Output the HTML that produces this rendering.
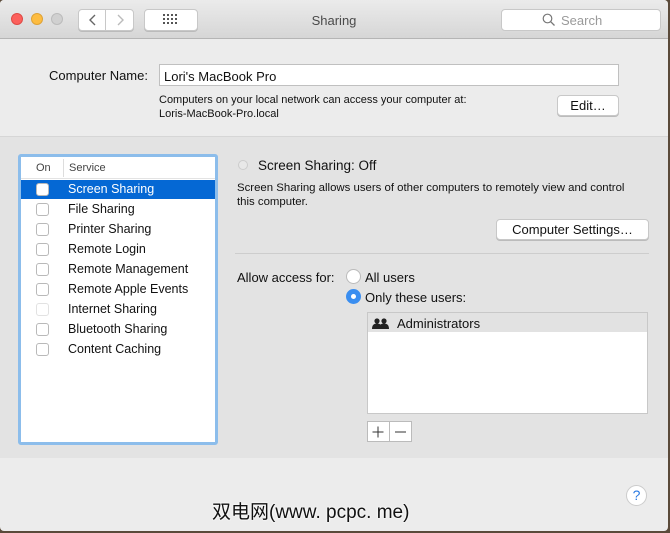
<!DOCTYPE html>
<html><head><style>
*{margin:0;padding:0;box-sizing:border-box}
body{width:670px;height:533px;overflow:hidden;font-family:"Liberation Sans",sans-serif;font-size:12.5px;color:#111;background:#5a4a3a;position:relative}
.a{position:absolute}
.win{left:0;top:0;width:668px;height:531px;background:#ececec;border-radius:4px;overflow:hidden}
.tb{left:0;top:0;width:668px;height:39px;background:linear-gradient(#ebebeb,#d6d6d6);border-bottom:1px solid #b5b5b5}
.dot{width:12px;height:12px;border-radius:50%;top:13px}
.btn{background:#fff;border:1px solid #c8c8c8;border-radius:4px;box-shadow:0 1px 0 #bbb}
.cb{width:13px;height:13px;border:1px solid #b9b9b9;border-radius:3px;background:#fff;left:36px}
.li{left:68px;font-size:12.5px}
</style></head><body>
<div class="a win">
<div class="a tb"></div>
<div class="a dot" style="left:11px;background:#fc605c;border:1px solid #de4a45"></div>
<div class="a dot" style="left:31px;background:#fdbc40;border:1px solid #dea236"></div>
<div class="a dot" style="left:51px;background:#d0d0d0;border:1px solid #bbb"></div>
<div class="a btn" style="left:78px;top:9px;width:56px;height:22px"></div>
<div class="a" style="left:105px;top:9px;width:1px;height:22px;background:#c8c8c8"></div>
<svg class="a" style="left:86px;top:13px" width="44" height="14"><path d="M9 2 L4 7 L9 12" stroke="#666" stroke-width="1.4" fill="none"/><path d="M32 2 L37 7 L32 12" stroke="#bbb" stroke-width="1.4" fill="none"/></svg>
<div class="a btn" style="left:144px;top:9px;width:54px;height:22px"></div>
<svg class="a" style="left:163px;top:14px" width="16" height="12" fill="#555"><g><rect x="0" y="0" width="2" height="2"/><rect x="4" y="0" width="2" height="2"/><rect x="8" y="0" width="2" height="2"/><rect x="12" y="0" width="2" height="2"/><rect x="0" y="4" width="2" height="2"/><rect x="4" y="4" width="2" height="2"/><rect x="8" y="4" width="2" height="2"/><rect x="12" y="4" width="2" height="2"/><rect x="0" y="8" width="2" height="2"/><rect x="4" y="8" width="2" height="2"/><rect x="8" y="8" width="2" height="2"/><rect x="12" y="8" width="2" height="2"/></g></svg>
<div class="a" style="left:0;width:668px;top:13px;text-align:center;font-size:13px;color:#4a4a4a">Sharing</div>
<div class="a btn" style="left:501px;top:9px;width:160px;height:22px;box-shadow:none"></div>
<svg class="a" style="left:542px;top:13px" width="14" height="14"><circle cx="5.5" cy="5.5" r="4.3" stroke="#777" stroke-width="1.2" fill="none"/><path d="M8.7 8.7 L12.5 12.5" stroke="#777" stroke-width="1.3"/></svg>
<div class="a" style="left:561px;top:13px;font-size:13px;color:#9a9a9a">Search</div>

<div class="a" style="left:49px;top:68px;font-size:13px">Computer Name:</div>
<div class="a" style="left:159px;top:64px;width:460px;height:22px;background:#fff;border:1px solid #c0c0c0;padding:4px 4px;font-size:13px">Lori's MacBook Pro</div>
<div class="a" style="left:159px;top:93px;font-size:11px;line-height:14px">Computers on your local network can access your computer at:<br>Loris-MacBook-Pro.local</div>
<div class="a btn" style="left:557px;top:95px;width:62px;height:21px;text-align:center;line-height:19px;font-size:13px">Edit…</div>

<div class="a" style="left:0;top:136px;width:668px;height:1px;background:#d6d6d6"></div>
<div class="a" style="left:0;top:137px;width:668px;height:321px;background:#e3e3e3"></div>

<div class="a" style="left:18px;top:154px;width:200px;height:291px;border:3px solid #8cbdeb;border-radius:3px;background:#fff"></div>
<div class="a" style="left:21px;top:157px;width:194px;height:22px;border-bottom:1px solid #e3e3e3"></div>
<div class="a" style="left:36px;top:162px;font-size:11px;color:#444">On</div>
<div class="a" style="left:63px;top:159px;width:1px;height:18px;background:#ddd"></div>
<div class="a" style="left:69px;top:162px;font-size:11px;color:#444">Service</div>
<div class="a" style="left:21px;top:180px;width:194px;height:19px;background:#0568d4"></div>
<div class="a cb" style="top:183px"></div><div class="a li" style="top:182px;color:#fff">Screen Sharing</div>
<div class="a cb" style="top:203px"></div><div class="a li" style="top:202px">File Sharing</div>
<div class="a cb" style="top:223px"></div><div class="a li" style="top:222px">Printer Sharing</div>
<div class="a cb" style="top:243px"></div><div class="a li" style="top:242px">Remote Login</div>
<div class="a cb" style="top:263px"></div><div class="a li" style="top:262px">Remote Management</div>
<div class="a cb" style="top:283px"></div><div class="a li" style="top:282px">Remote Apple Events</div>
<div class="a cb" style="top:303px;border-color:#e2e2e2"></div><div class="a li" style="top:302px">Internet Sharing</div>
<div class="a cb" style="top:323px"></div><div class="a li" style="top:322px">Bluetooth Sharing</div>
<div class="a cb" style="top:343px"></div><div class="a li" style="top:342px">Content Caching</div>

<div class="a" style="left:238px;top:160px;width:10px;height:10px;border-radius:50%;border:1px solid #ccc;background:#e8e8e8"></div>
<div class="a" style="left:258px;top:158px;font-size:13.5px">Screen Sharing: Off</div>
<div class="a" style="left:237px;top:181px;font-size:11.4px;line-height:14px">Screen Sharing allows users of other computers to remotely view and control<br>this computer.</div>
<div class="a btn" style="left:496px;top:219px;width:153px;height:21px;text-align:center;line-height:19px;font-size:13px">Computer Settings…</div>
<div class="a" style="left:235px;top:253px;width:414px;height:1px;background:#cdcdcd"></div>
<div class="a" style="left:237px;top:270px;font-size:13px">Allow access for:</div>
<div class="a" style="left:346px;top:269px;width:15px;height:15px;border-radius:50%;border:1px solid #bbb;background:#fff"></div>
<div class="a" style="left:365px;top:270px;font-size:13px">All users</div>
<div class="a" style="left:346px;top:289px;width:15px;height:15px;border-radius:50%;background:#3a8ef0"></div>
<div class="a" style="left:351px;top:294px;width:5px;height:5px;border-radius:50%;background:#fff"></div>
<div class="a" style="left:365px;top:290px;font-size:13px">Only these users:</div>
<div class="a" style="left:367px;top:312px;width:281px;height:102px;background:#fff;border:1px solid #c8c8c8"></div>
<div class="a" style="left:368px;top:313px;width:279px;height:19px;background:#e2e2e2"></div>
<svg class="a" style="left:372px;top:318px" width="18" height="11" fill="#222"><circle cx="5" cy="3" r="2.6"/><path d="M0 11 Q0 5.5 5 5.5 Q10 5.5 10 11Z"/><circle cx="12" cy="3" r="2.6"/><path d="M7 11 Q7 5.5 12 5.5 Q17 5.5 17 11Z"/></svg>
<div class="a" style="left:397px;top:316px;font-size:13px">Administrators</div>
<div class="a" style="left:367px;top:421px;width:45px;height:21px;background:#fff;border:1px solid #bbb"></div>
<div class="a" style="left:389px;top:421px;width:1px;height:21px;background:#bbb"></div>
<svg class="a" style="left:367px;top:421px" width="45" height="21"><path d="M11 5.5 V16.5 M5.5 11 H16.5" stroke="#333" stroke-width="1"/><path d="M28 11 H39" stroke="#333" stroke-width="1"/></svg>

<div class="a" style="left:626px;top:485px;width:21px;height:21px;border-radius:50%;background:#fff;border:1px solid #ccc;text-align:center;color:#2a7ae2;font-size:14px;line-height:19px">?</div>
<div class="a" style="left:212px;top:497px;font-size:19px;color:#111;font-family:'Liberation Sans','Noto Sans CJK SC',sans-serif;text-shadow:0 0 2px #fff,0 0 2px #fff">双电网(www. pcpc. me)</div>
</div>
</body></html>
